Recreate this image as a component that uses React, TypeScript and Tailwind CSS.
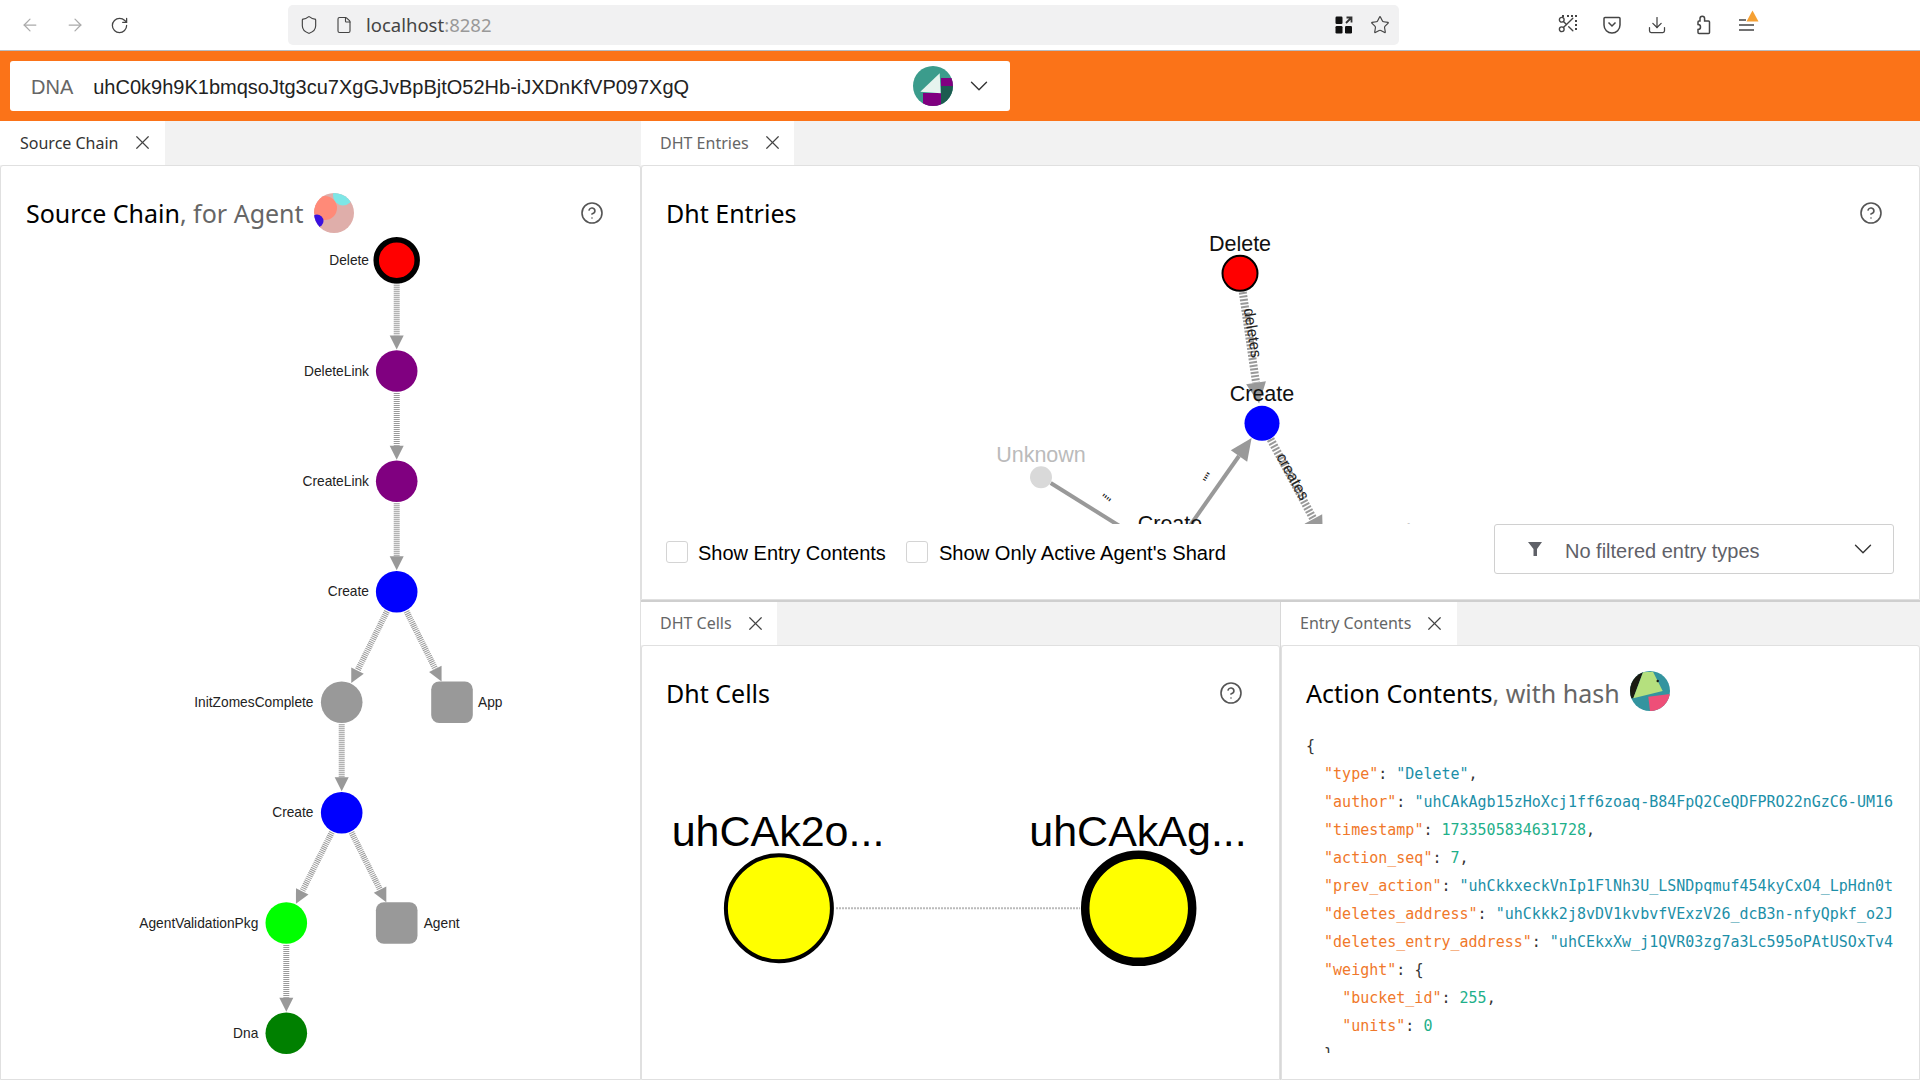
import React from "react";
import { ArrowLeft, ArrowRight, RotateCw, Shield, File, Star, Download, X, ChevronDown, CircleHelp, Scissors } from "lucide-react";

type EdgeProps = { x1: number; y1: number; x2: number; y2: number; r1?: number; r2?: number; w?: number; dash?: string; hw?: number; hl?: number };

function Edge({ x1, y1, x2, y2, r1 = 22, r2 = 21.5, w = 6, dash = "1 1", hw = 14, hl = 14 }: EdgeProps) {
  const dx = x2 - x1;
  const dy = y2 - y1;
  const d = Math.hypot(dx, dy);
  const ux = dx / d;
  const uy = dy / d;
  const sx = x1 + ux * r1;
  const sy = y1 + uy * r1;
  const tx = x2 - ux * r2;
  const ty = y2 - uy * r2;
  const bx = tx - ux * hl;
  const by = ty - uy * hl;
  const nx = -uy * (hw / 2);
  const ny = ux * (hw / 2);
  return (
    <g>
      <line x1={sx} y1={sy} x2={bx} y2={by} stroke="#999" strokeWidth={w} strokeDasharray={dash} />
      <polygon points={`${tx},${ty} ${bx + nx},${by + ny} ${bx - nx},${by - ny}`} fill="#999" />
    </g>
  );
}

function AvatarDna() {
  return (
    <svg width="40" height="40" viewBox="0 0 40 40" className="shrink-0">
      <defs><clipPath id="a1"><circle cx="20" cy="20" r="20" /></clipPath></defs>
      <g clipPath="url(#a1)">
        <rect width="40" height="40" fill="#3b9c8c" />
        <rect x="28" y="12" width="12" height="8" fill="#800080" />
        <rect x="28" y="20" width="12" height="20" fill="#1c5c50" />
        <rect x="10" y="27" width="18" height="13" fill="#800080" />
        <polygon points="26.7,7.3 7.3,25.7 27.7,27.3" fill="#e6f4ee" />
      </g>
    </svg>
  );
}

function AvatarAgent() {
  return (
    <svg width="40" height="40" viewBox="0 0 40 40" className="shrink-0">
      <defs><clipPath id="a2"><circle cx="20" cy="20" r="20" /></clipPath></defs>
      <g clipPath="url(#a2)">
        <rect width="40" height="40" fill="#dfaeaa" />
        <circle cx="11" cy="15" r="12" fill="#ff8a78" />
        <circle cx="29" cy="2.5" r="10" fill="#7de6e6" />
        <circle cx="3" cy="28" r="6.5" fill="#3a10e0" />
      </g>
    </svg>
  );
}

function AvatarHash() {
  return (
    <svg width="40" height="40" viewBox="0 0 40 40" className="shrink-0">
      <defs><clipPath id="a3"><circle cx="20" cy="20" r="20" /></clipPath></defs>
      <g clipPath="url(#a3)">
        <rect width="40" height="40" fill="#33949f" />
        <polygon points="0,0 13,1 3.3,27.3 0,27.3" fill="#1a1a12" />
        <polygon points="13,1.3 23,0.7 32.7,20 3.3,27.3" fill="#b5e07e" />
        <circle cx="27.7" cy="10" r="1.2" fill="#1a1a12" />
        <polygon points="18.3,25.7 40,23 40,40 20,40" fill="#ee4f78" />
      </g>
    </svg>
  );
}

function Tab({ label, active, width, shift }: { label: string; active?: boolean; width: string; shift?: boolean }) {
  return (
    <div className={`flex h-full items-center gap-[12px] bg-white pb-[1px] font-['Noto_Sans',sans-serif] text-base ${shift ? "pl-[19px]" : "pl-5"} ${width} ${active ? "text-[#333]" : "text-[#666]"}`}>
      <span>{label}</span>
      <X size={23} strokeWidth={1.25} className="text-[#444]" />
    </div>
  );
}

function Help() {
  return <CircleHelp size={24} strokeWidth={1.6} className="text-[#555]" />;
}

const k = "text-[#f0782a]";
const s = "text-[#1c8fa8]";
const n = "text-[#1fb08a]";

function Line({ indent = 0, name, children }: { indent?: number; name?: string; children?: React.ReactNode }) {
  return (
    <div className="h-7 whitespace-pre leading-7">
      {"  ".repeat(indent)}
      {name && <span className={k}>"{name}"</span>}
      {name && ": "}
      {children}
    </div>
  );
}

export default function App() {
  return (
    <div className="flex h-screen flex-col overflow-hidden bg-white font-['Liberation_Sans',sans-serif]">
      {/* browser chrome */}
      <div className="relative flex h-[51px] shrink-0 items-center border-b border-[#b8bcc0] bg-white pl-[20px] text-[#555]">
        <ArrowLeft size={20} strokeWidth={1.5} className="text-[#aaa]" />
        <ArrowRight size={20} strokeWidth={1.5} className="ml-[25px] text-[#aaa]" />
        <RotateCw size={19} strokeWidth={1.6} className="ml-[25px] text-[#444]" />
        <div className="ml-[159px] flex h-10 w-[1111px] items-center rounded-[5px] bg-[#f1f1f2] pl-[11px] pr-[9px]">
          <Shield size={20} strokeWidth={1.4} className="text-[#444]" />
          <File size={18} strokeWidth={1.5} className="ml-[16px] text-[#444]" />
          <span className="ml-[13px] font-['Noto_Sans',sans-serif] text-[18.5px] text-[#444]">localhost<span className="text-[#999]">:8282</span></span>
          <div className="ml-auto flex items-center gap-[17px]">
            <svg width="18" height="18" viewBox="0 0 18 18">
              <rect x="0.5" y="0.5" width="7" height="7.5" rx="1.2" fill="#111" />
              <rect x="0.5" y="10" width="7" height="7.5" rx="1.2" fill="#111" />
              <rect x="10" y="10" width="7" height="7.5" rx="1.2" fill="#111" />
              <path d="M11 7 L16 2 M11.5 1.5 H16.5 V6.5" stroke="#333" strokeWidth="1.8" fill="none" />
            </svg>
            <Star size={20} strokeWidth={1.4} className="text-[#444]" />
          </div>
        </div>
        <div className="ml-[158px] flex items-center gap-[25px] text-[#444]">
          <div className="relative h-5 w-5">
            <Scissors size={19} strokeWidth={1.7} />
            <div className="absolute right-0 top-0 h-[15px] w-[15px] border-r-2 border-t-2 border-dotted border-[#444]" />
          </div>
          <svg width="20" height="20" viewBox="0 0 20 20" fill="none" stroke="#444" strokeWidth="1.5">
            <path d="M3 2.5 H17 Q18 2.5 18 3.5 V10 A8 8 0 0 1 2 10 V3.5 Q2 2.5 3 2.5 Z" />
            <path d="M6.5 7.5 L10 11 L13.5 7.5" />
          </svg>
          <Download size={20} strokeWidth={1.5} />
          <svg width="20" height="20" viewBox="0 0 20 20" fill="none" stroke="#444" strokeWidth="1.5">
            <path d="M8 3.5 a2.3 2.3 0 0 1 4.6 0 V6 H16.5 a1 1 0 0 1 1 1 V17.5 a1 1 0 0 1 -1 1 H7 a1 1 0 0 1 -1 -1 V14.5 a2.5 2.5 0 0 0 0 -5 V7 a1 1 0 0 1 1 -1 H8 Z" />
          </svg>
          <div className="relative h-5 w-5">
            <svg width="20" height="20" viewBox="0 0 20 20" stroke="#444" strokeWidth="1.5">
              <path d="M2 5 H9 M2 10 H17 M2 15 H17" />
            </svg>
            <svg width="13" height="12" viewBox="0 0 13 12" className="absolute -top-[5px] left-[9px]">
              <path d="M6.5 0.5 L12.5 11.5 H0.5 Z" fill="#f5a033" />
            </svg>
          </div>
        </div>
      </div>

      {/* orange DNA bar */}
      <div className="flex h-[70px] shrink-0 items-center bg-[#fb7318] pl-[10px]">
        <div className="flex h-[50px] w-[1000px] items-center rounded-[3px] bg-white pl-[21px] text-xl">
          <span className="pt-[1px] text-[#666]">DNA</span>
          <span className="ml-[20px] pt-[1px] text-[#222]">uhC0k9h9K1bmqsoJtg3cu7XgGJvBpBjtO52Hb-iJXDnKfVP097XgQ</span>
          <div className="ml-auto flex items-center pr-[16px]">
            <AvatarDna />
            <ChevronDown size={30} strokeWidth={1.1} className="ml-[11px] text-[#333]" />
          </div>
        </div>
      </div>

      {/* panes */}
      <div className="flex min-h-0 flex-1 bg-[#f2f2f2]">
        <div className="flex w-[641px] shrink-0 flex-col">
          <div className="h-[44px] shrink-0"><Tab label="Source Chain" active width="w-[165px]" /></div>
          <div className="flex min-h-0 flex-1 flex-col rounded-t-[3px] border border-[#e0e0e0] bg-white">
            <div className="flex h-[70px] shrink-0 items-center pl-[25px] pr-[36px] pt-[24px] font-['Noto_Sans',sans-serif] text-[25px] leading-none">
              <span className="text-black">Source Chain<span className="text-[#666]">, for Agent</span></span>
              <span className="ml-[10px]"><AvatarAgent /></span>
              <span className="ml-auto"><Help /></span>
            </div>
            <svg width="638" height="843" viewBox="1 236 638 843" className="block shrink-0 font-['Liberation_Sans',sans-serif]">
              <Edge x1={396.7} y1={260.3} x2={396.7} y2={371} r1={23} />
              <Edge x1={396.7} y1={371} x2={396.7} y2={481.3} />
              <Edge x1={396.7} y1={481.3} x2={396.7} y2={591.7} />
              <Edge x1={396.7} y1={591.7} x2={341.7} y2={702.3} />
              <Edge x1={396.7} y1={591.7} x2={452} y2={702.3} r2={23.3} />
              <Edge x1={341.7} y1={702.3} x2={341.7} y2={812.7} />
              <Edge x1={341.7} y1={812.7} x2={286.3} y2={923} />
              <Edge x1={341.7} y1={812.7} x2={396.7} y2={923} r2={23.3} />
              <Edge x1={286.3} y1={923} x2={286.3} y2={1033.3} />
              <circle cx="396.7" cy="260.3" r="20.5" fill="#ff0000" stroke="#000" strokeWidth="5.5" />
              <circle cx="396.7" cy="371" r="20.8" fill="#800080" />
              <circle cx="396.7" cy="481.3" r="20.8" fill="#800080" />
              <circle cx="396.7" cy="591.7" r="20.8" fill="#0000ff" />
              <circle cx="341.7" cy="702.3" r="20.8" fill="#999" />
              <rect x="431.2" y="681.5" width="41.6" height="41.6" rx="8" fill="#999" />
              <circle cx="341.7" cy="812.7" r="20.8" fill="#0000ff" />
              <circle cx="286.3" cy="923" r="20.8" fill="#00ff00" />
              <rect x="375.9" y="902.2" width="41.6" height="41.6" rx="8" fill="#999" />
              <circle cx="286.3" cy="1033.3" r="20.8" fill="#008000" />
              <g fontSize="13.75" fill="#222">
                <text x="369" y="265" textAnchor="end">Delete</text>
                <text x="369" y="375.5" textAnchor="end">DeleteLink</text>
                <text x="369" y="486" textAnchor="end">CreateLink</text>
                <text x="369" y="596" textAnchor="end">Create</text>
                <text x="313.5" y="707" textAnchor="end">InitZomesComplete</text>
                <text x="478" y="707">App</text>
                <text x="313.5" y="817" textAnchor="end">Create</text>
                <text x="258.3" y="927.5" textAnchor="end">AgentValidationPkg</text>
                <text x="423.7" y="927.5">Agent</text>
                <text x="258.3" y="1038" textAnchor="end">Dna</text>
              </g>
            </svg>
          </div>
        </div>

        <div className="flex min-w-0 flex-1 flex-col">
          {/* top right */}
          <div className="flex h-[481px] shrink-0 flex-col border-b-2 border-[#cfcfcf]">
            <div className="h-[44px] shrink-0"><Tab label="DHT Entries" width="w-[153px]" shift /></div>
            <div className="flex min-h-0 flex-1 flex-col rounded-t-[3px] border border-[#e0e0e0] bg-white">
              <div className="flex h-[70px] shrink-0 items-center pl-[24px] pr-[36px] pt-[24px] font-['Noto_Sans',sans-serif] text-[25px] leading-none text-black">
                <span>Dht Entries</span>
                <span className="ml-auto"><Help /></span>
              </div>
              <svg width="1277" height="288" viewBox="642 236 1277 288" className="block shrink-0 font-['Liberation_Sans',sans-serif]">
                <Edge x1={1240} y1={273.3} x2={1262} y2={423.3} r1={19} r2={20} w={8} dash="2 1.5" hw={20} hl={21} />
                <Edge x1={1262} y1={423.3} x2={1329} y2={548} r1={18} r2={13} w={8} dash="2 1.5" hw={20} hl={20} />
                <Edge x1={1170} y1={554} x2={1262} y2={423.3} r1={18} r2={18} w={4} dash="none" hw={20} hl={22} />
                <line x1={1050.7} y1={483} x2={1150} y2={545} stroke="#999" strokeWidth="4" />
                <circle cx="1240" cy="273.3" r="17.5" fill="#ff0000" stroke="#000" strokeWidth="2" />
                <circle cx="1262" cy="423.3" r="17.5" fill="#0000ff" />
                <circle cx="1041" cy="477.3" r="11" fill="#d9d9d9" />
                <g fontSize="21.5" textAnchor="middle" fill="#111">
                  <text x="1240" y="251">Delete</text>
                  <text x="1262" y="400.5">Create</text>
                  <text x="1170" y="530.5">Create</text>
                  <text x="1041" y="462" fill="#bbb">Unknown</text>
                  <text x="1250" y="538.8" fill="#ccc">Entry</text>
                  <text x="1365" y="538.8" fill="#ccc">DnaProperties</text>
                </g>
                <text transform="translate(1251.6 333) rotate(81)" fontSize="15.5" textAnchor="middle" dominantBaseline="middle" fill="#222">deletes</text>
                <text transform="translate(1292 477) rotate(61)" fontSize="15.5" textAnchor="middle" dominantBaseline="middle" fill="#222">creates</text>
                <text transform="translate(1104 501) rotate(38)" fontSize="14" textAnchor="middle" dominantBaseline="middle" fill="#222">""</text>
                <text transform="translate(1210 479) rotate(-57)" fontSize="14" textAnchor="middle" dominantBaseline="middle" fill="#222">""</text>
              </svg>
              <div className="flex h-[50px] shrink-0 items-center pl-[24px] pr-[25px] text-xl text-black">
                <div className="mt-[5px] flex items-center">
                  <div className="h-[22px] w-[22px] rounded-[3px] border border-[#d4d4d4] bg-white" />
                  <span className="ml-[10px] mt-[3px]">Show Entry Contents</span>
                  <div className="ml-[20px] h-[22px] w-[22px] rounded-[3px] border border-[#d4d4d4] bg-white" />
                  <span className="ml-[11px] mt-[3px] text-[20.15px]">Show Only Active Agent's Shard</span>
                </div>
                <div className="ml-auto flex h-[50px] w-[400px] items-center rounded-[3px] border border-[#d0d0d0] pl-[31px] pr-[15px] text-[#5f6168]">
                  <svg width="18" height="18" viewBox="0 0 18 18" className="shrink-0">
                    <path d="M2 2 H16 L11 9 V16 H7.5 V9 Z" fill="#5f6168" />
                  </svg>
                  <span className="ml-[21px] pt-[3px]">No filtered entry types</span>
                  <ChevronDown size={30} strokeWidth={1.1} className="ml-auto text-[#333]" />
                </div>
              </div>
            </div>
          </div>

          {/* bottom right */}
          <div className="flex min-h-0 flex-1">
            <div className="flex w-[640px] shrink-0 flex-col border-r border-[#d8d8d8]">
              <div className="h-[43px] shrink-0"><Tab label="DHT Cells" width="w-[136px]" shift /></div>
              <div className="flex min-h-0 flex-1 flex-col rounded-t-[3px] border border-[#e0e0e0] bg-white">
                <div className="flex h-[70px] shrink-0 items-center pl-[24px] pr-[36px] pt-[24px] font-['Noto_Sans',sans-serif] text-[25px] leading-none text-black">
                  <span>Dht Cells</span>
                  <span className="ml-auto"><Help /></span>
                </div>
                <svg width="637" height="364" viewBox="642 716 637 364" className="block shrink-0 font-['Liberation_Sans',sans-serif]">
                  <line x1="836" y1="908.3" x2="1080" y2="908.3" stroke="#bbb" strokeWidth="2" strokeDasharray="2 1" />
                  <circle cx="778.9" cy="908.3" r="53" fill="#ffff00" stroke="#000" strokeWidth="4" />
                  <circle cx="1138.7" cy="908.3" r="53.5" fill="#ffff00" stroke="#000" strokeWidth="8.5" />
                  <g fontSize="43" textAnchor="middle" fill="#000">
                    <text x="778" y="846">uhCAk2o...</text>
                    <text x="1138" y="846">uhCAkAg...</text>
                  </g>
                </svg>
              </div>
            </div>
            <div className="flex min-w-0 flex-1 flex-col">
              <div className="h-[43px] shrink-0"><Tab label="Entry Contents" width="w-[176px]" shift /></div>
              <div className="flex min-h-0 flex-1 flex-col rounded-t-[3px] border border-[#e0e0e0] bg-white">
                <div className="flex h-[70px] shrink-0 items-center pl-[24px] pt-[24px] font-['Noto_Sans',sans-serif] text-[25px] leading-none text-black">
                  <span>Action Contents<span className="text-[#666]">, with hash</span></span>
                  <span className="-mt-[4px] ml-[10px]"><AvatarHash /></span>
                </div>
                <div className="ml-[24px] mt-[16px] h-[321px] w-[587px] overflow-hidden font-['DejaVu_Sans_Mono',monospace] text-[15px] text-[#333]">
                  <Line>{"{"}</Line>
                  <Line indent={1} name="type"><span className={s}>"Delete"</span>,</Line>
                  <Line indent={1} name="author"><span className={s}>"uhCAkAgb15zHoXcj1ff6zoaq-B84FpQ2CeQDFPRO22nGzC6-UM16YxkT"</span>,</Line>
                  <Line indent={1} name="timestamp"><span className={n}>1733505834631728</span>,</Line>
                  <Line indent={1} name="action_seq"><span className={n}>7</span>,</Line>
                  <Line indent={1} name="prev_action"><span className={s}>"uhCkkxeckVnIp1FlNh3U_LSNDpqmuf454kyCxO4_LpHdn0tcRtYw"</span>,</Line>
                  <Line indent={1} name="deletes_address"><span className={s}>"uhCkkk2j8vDV1kvbvfVExzV26_dcB3n-nfyQpkf_o2JUfQaZ"</span>,</Line>
                  <Line indent={1} name="deletes_entry_address"><span className={s}>"uhCEkxXw_j1QVR03zg7a3Lc595oPAtUSOxTv4AqLm"</span>,</Line>
                  <Line indent={1} name="weight">{"{"}</Line>
                  <Line indent={2} name="bucket_id"><span className={n}>255</span>,</Line>
                  <Line indent={2} name="units"><span className={n}>0</span></Line>
                  <Line indent={1}>{"}"}</Line>
                </div>
              </div>
            </div>
          </div>
        </div>
      </div>
    </div>
  );
}
